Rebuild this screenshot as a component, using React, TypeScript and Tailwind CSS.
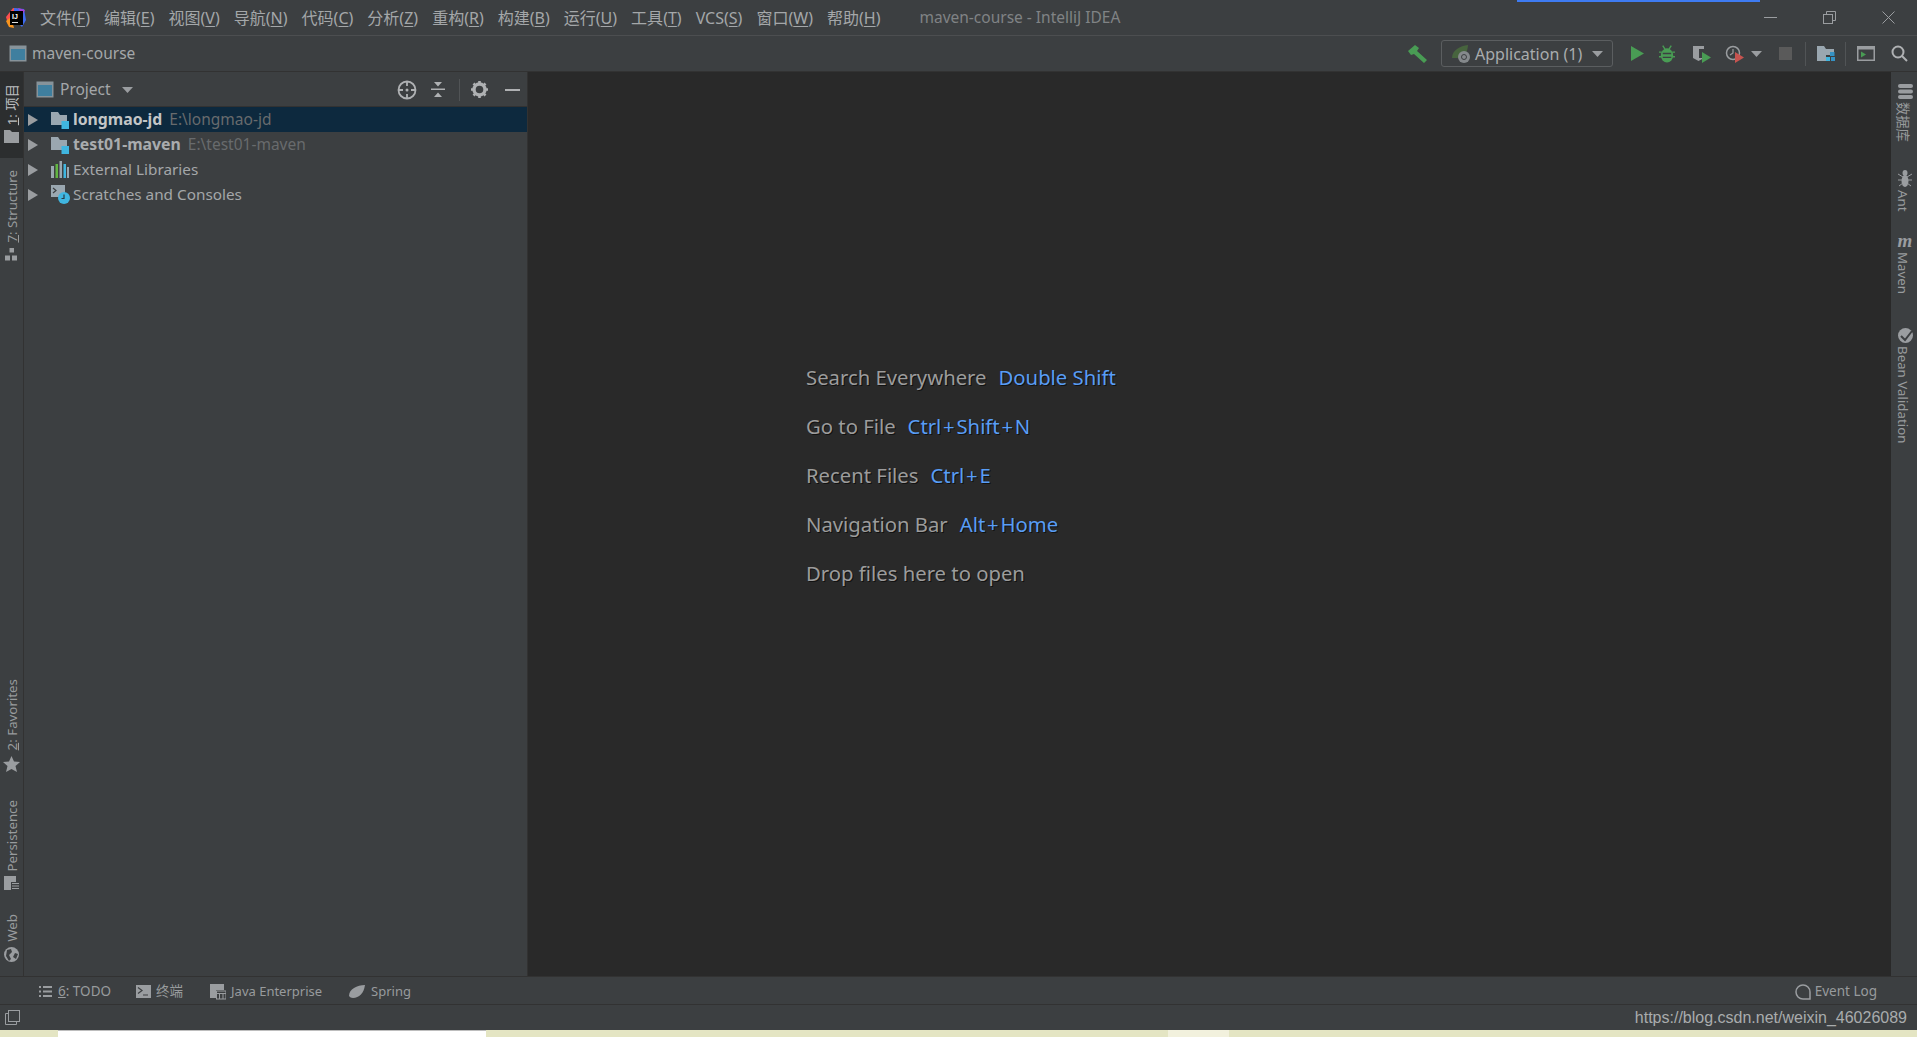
const UI = "font-['Noto_Sans','Noto_Sans_CJK_SC',sans-serif]";

const MENU = [
  ["文件", "F"],
  ["编辑", "E"],
  ["视图", "V"],
  ["导航", "N"],
  ["代码", "C"],
  ["分析", "Z"],
  ["重构", "R"],
  ["构建", "B"],
  ["运行", "U"],
  ["工具", "T"],
  ["VCS", "S"],
  ["窗口", "W"],
  ["帮助", "H"],
];

const HINTS = [
  ["Search Everywhere", "Double Shift"],
  ["Go to File", "Ctrl+Shift+N"],
  ["Recent Files", "Ctrl+E"],
  ["Navigation Bar", "Alt+Home"],
  ["Drop files here to open", ""],
];

function Logo() {
  return (
    <svg width="22" height="22" viewBox="0 0 22 22">
      <path d="M1 10 L8 1 L15 2 L10 12 L3 17 Z" fill="#fc4f4f" />
      <path d="M9 1 L19 2 L21 13 L17 20 L9 12 Z" fill="#3d6bf0" />
      <path d="M1 14 L6 10 L9 21 L4 20 Z" fill="#f7941d" />
      <path d="M13 1 L20 3 L17 9 Z" fill="#a83fd8" />
      <rect x="5" y="4" width="13" height="14" fill="#000" />
      <rect x="7" y="15" width="6" height="1" fill="#ddd" />
      <text x="7" y="12" fontSize="7" fontWeight="700" fill="#fff" fontFamily="Liberation Sans">IJ</text>
    </svg>
  );
}

function ModuleIcon() {
  return (
    <svg width="18" height="17" viewBox="0 0 18 17">
      <rect x="0.5" y="0.5" width="17" height="16" fill="#87939a" />
      <rect x="2" y="4" width="14" height="11" fill="#3f7f9f" />
    </svg>
  );
}

function FolderModule() {
  return (
    <svg width="19" height="18" viewBox="0 0 19 18">
      <path d="M0 1 H7 L9 4 H16 V14 H0 Z" fill="#9aa7b0" />
      <rect x="10.5" y="10" width="7.5" height="8" fill="#40b6e0" />
    </svg>
  );
}

function LibIcon() {
  return (
    <svg width="18" height="17" viewBox="0 0 18 17">
      <rect x="0" y="5" width="3" height="12" fill="#9aa7b0" />
      <rect x="4.5" y="3" width="2.5" height="14" fill="#62b543" />
      <rect x="8.5" y="0" width="2.5" height="17" fill="#9aa7b0" />
      <rect x="12.5" y="3" width="2.5" height="14" fill="#40b6e0" />
      <rect x="16" y="6" width="2" height="11" fill="#9aa7b0" />
    </svg>
  );
}

function ScratchIcon() {
  return (
    <svg width="19" height="19" viewBox="0 0 19 19">
      <rect x="0" y="0" width="14" height="12" fill="#9aa7b0" />
      <path d="M2 3 L5 5.5 L2 8" fill="none" stroke="#3c3f41" strokeWidth="1.2" />
      <circle cx="13" cy="13" r="6" fill="#40b6e0" />
      <path d="M13 9.5 V13.5 H10.5" fill="none" stroke="#2b3a44" strokeWidth="1.2" />
    </svg>
  );
}

function Arrow({ className = "" }: { className?: string }) {
  return (
    <svg width="10" height="12" viewBox="0 0 10 12" className={className}>
      <path d="M0 0 L10 6 L0 12 Z" fill="#9a9da0" />
    </svg>
  );
}

function Caret() {
  return (
    <svg width="11" height="6" viewBox="0 0 11 6">
      <path d="M0 0 H11 L5.5 6 Z" fill="#9a9da0" />
    </svg>
  );
}

function TreeRow({ icon, name, path, bold, selected }: { icon: React.ReactNode; name: string; path?: string; bold?: boolean; selected?: boolean }) {
  return (
    <div className={`flex h-[25px] items-center pl-[4px] ${selected ? "bg-[#0d293e]" : ""}`}>
      <Arrow className="shrink-0" />
      <span className="ml-[13px] flex w-[22px] shrink-0 justify-start">{icon}</span>
      <span className={bold ? `text-[15.8px] font-bold ${selected ? "text-[#c4c6c7]" : "text-[#a9acae]"}` : "text-[15.3px] text-[#a4a7a9]"}>{name}</span>
      {path && <span className="ml-[7px] text-[15.5px] text-[#686b6d]">{path}</span>}
    </div>
  );
}

function StripeLeft({ label, icon, active, className = "" }: { label: React.ReactNode; icon: React.ReactNode; active?: boolean; className?: string }) {
  return (
    <div className={`flex w-[23px] flex-col items-center ${active ? "bg-[#2c2e2f] text-[#bcbfc0]" : "text-[#989b9d]"} ${className}`}>
      <span className="ml-[2px] rotate-180 whitespace-nowrap text-[13.3px] leading-[23px] [text-orientation:sideways] [writing-mode:vertical-rl]">{label}</span>
      <span className="mt-[5px]">{icon}</span>
    </div>
  );
}

function StripeRight({ label, icon, className = "" }: { label: string; icon: React.ReactNode; className?: string }) {
  return (
    <div className={`flex flex-col items-center text-[#989b9d] ${className}`}>
      <span className="ml-[2px] flex">{icon}</span>
      <span className="mr-[2px] mt-[3px] whitespace-nowrap text-[13.3px] leading-[22px] [text-orientation:sideways] [writing-mode:vertical-rl]">{label}</span>
    </div>
  );
}

function KeyText({ keys }: { keys: string }) {
  const parts = keys.split("+");
  return (
    <span className="text-[#589df6]">
      {parts.map((part, i) => (
        <span key={part}>
          {i > 0 && <span className="px-[1.75px]">+</span>}
          {part}
        </span>
      ))}
    </span>
  );
}

const G = "#9a9da0";

function ToolIcon({ w, children }: { w: number; children?: React.ReactNode }) {
  return (
    <span className="flex shrink-0 items-center justify-center" style={{ width: w }}>
      {children}
    </span>
  );
}

export default function App() {
  return (
    <div className={`flex h-[1037px] w-[1917px] flex-col overflow-hidden bg-[#3c3f41] ${UI}`}>
      {/* title bar */}
      <div className="relative flex h-[36px] shrink-0 items-center border-b border-[#4c4e50] pl-[5px]">
        <Logo />
        <div className="ml-[13px] flex gap-[14px] text-[16px] text-[#a4a7a9]">
          {MENU.map(([name, key]) => (
            <span key={key} className="whitespace-nowrap">
              {name}(<span className="underline underline-offset-2">{key}</span>)
            </span>
          ))}
        </div>
        <span className="ml-[39px] text-[15.5px] text-[#808385]">maven-course - IntelliJ IDEA</span>
        <div className="absolute left-[1517px] top-0 h-[2px] w-[243px] bg-[#3e7bf2]" />
        <div className="ml-auto flex items-center gap-[46px] pr-[22px]">
          <svg width="13" height="2" viewBox="0 0 13 2"><rect width="13" height="1" fill={G} /></svg>
          <svg width="13" height="13" viewBox="0 0 13 13" fill="none" stroke={G}>
            <rect x="0.5" y="3.5" width="9" height="9" />
            <path d="M3.5 3 V0.5 H12.5 V9.5 H10" />
          </svg>
          <svg width="13" height="13" viewBox="0 0 13 13" stroke={G}><path d="M0.5 0.5 L12.5 12.5 M12.5 0.5 L0.5 12.5" /></svg>
        </div>
      </div>

      {/* navigation bar */}
      <div className="flex h-[36px] shrink-0 items-center border-b border-[#323232] pl-[9px] pr-[9px]">
        <ModuleIcon />
        <span className="ml-[5px] text-[15.5px] text-[#a4a7a9]">maven-course</span>
        <div className="ml-auto flex items-center">
          <ToolIcon w={20}>
            <svg width="19" height="18" viewBox="0 0 19 18" fill="#499c54">
              <path d="M0 6 L7 0 L11 3 L9 6 L19 15 L16 18 L6 9 L3 10 Z" />
            </svg>
          </ToolIcon>
          <div className="ml-[14px] flex h-[27px] w-[172px] items-center rounded-[3px] border border-[#5b5e60] pl-[9px] pr-[9px]">
            <svg width="22" height="20" viewBox="0 0 22 20">
              <path d="M1 14 C1 6 9 2 17 1 C17 8 12 14 6 14 Z" fill="#47643e" />
              <circle cx="13" cy="13" r="6" fill="#85898c" />
              <circle cx="13" cy="13" r="2.5" fill="none" stroke="#3c3f41" />
            </svg>
            <span className="ml-[2px] text-[16px] text-[#a9acae]">Application (1)</span>
            <span className="ml-auto flex"><Caret /></span>
          </div>
          <ToolIcon w={18} />
          <ToolIcon w={13}>
            <svg width="13" height="15" viewBox="0 0 13 15"><path d="M0 0 L13 7.5 L0 15 Z" fill="#499c54" /></svg>
          </ToolIcon>
          <ToolIcon w={15} />
          <ToolIcon w={16}>
            <svg width="17" height="18" viewBox="0 0 17 18" fill="#499c54">
              <ellipse cx="8.5" cy="10.5" rx="6.5" ry="7.5" />
              <path d="M4 0 L6.5 4 M13 0 L10.5 4 M0 7 H3 M17 7 H14 M0 12 H3 M17 12 H14" stroke="#499c54" strokeWidth="1.5" />
              <path d="M4 8.5 H13 M4 12.5 H13" stroke="#3c3f41" strokeWidth="1.4" />
            </svg>
          </ToolIcon>
          <ToolIcon w={17} />
          <ToolIcon w={20}>
            <svg width="20" height="18" viewBox="0 0 20 18">
              <path d="M1 1 H12 V13 L6.5 16 L1 13 Z" fill="#9a9da0" />
              <path d="M7 4 H12 V13 H7 Z" fill="#3c3f41" />
              <path d="M10 7 L19 12.5 L10 18 Z" fill="#499c54" />
            </svg>
          </ToolIcon>
          <ToolIcon w={13} />
          <ToolIcon w={20}>
            <svg width="20" height="18" viewBox="0 0 20 18">
              <circle cx="8" cy="8" r="6.5" fill="none" stroke="#9a9da0" strokeWidth="1.5" />
              <path d="M8 4 V8 L5 10" fill="none" stroke="#9a9da0" strokeWidth="1.2" />
              <path d="M10 7 L19 12.5 L10 18 Z" fill="#c75450" />
            </svg>
          </ToolIcon>
          <ToolIcon w={6} />
          <Caret />
          <ToolIcon w={17} />
          <svg width="13" height="13" viewBox="0 0 13 13"><rect width="13" height="13" fill="#5a5a5a" /></svg>
          <span className="ml-[13px] h-[24px] w-px bg-[#515456]" />
          <ToolIcon w={11} />
          <svg width="18" height="16" viewBox="0 0 18 16">
            <path d="M0 0 H7 L9 3 H17 V9 H9 V15 H0 Z" fill="#9aa7b0" />
            <rect x="13" y="6" width="4.5" height="4" fill="#3592c4" />
            <rect x="9" y="11" width="4" height="4" fill="#40b6e0" />
            <rect x="14" y="11" width="4" height="4" fill="#3592c4" />
          </svg>
          <span className="ml-[10px] h-[24px] w-px bg-[#515456]" />
          <ToolIcon w={11} />
          <svg width="18" height="15" viewBox="0 0 18 15">
            <rect x="0.75" y="0.75" width="16.5" height="13.5" fill="none" stroke="#9a9da0" strokeWidth="1.5" />
            <rect x="1" y="1" width="16" height="2.5" fill="#9a9da0" />
            <path d="M4 5.5 L9 8.5 L4 11.5 Z" fill="#499c54" />
          </svg>
          <ToolIcon w={16} />
          <svg width="17" height="17" viewBox="0 0 17 17" fill="none" stroke="#afb1b3" strokeWidth="2">
            <circle cx="7" cy="7" r="5.5" />
            <path d="M11 11 L16 16" />
          </svg>
        </div>
      </div>

      {/* main area */}
      <div className="flex min-h-0 flex-1">
        <div className="flex w-[24px] shrink-0 flex-col border-r border-[#323232]">
          <StripeLeft
            active
            className="h-[86px] pt-[12px]"
            label={<><span className="underline">1</span>: 项目</>}
            icon={
              <svg width="15" height="13" viewBox="0 0 15 13"><path d="M0 0 H6 L8 2 H15 V13 H0 Z" fill="#9a9da0" /></svg>
            }
          />
          <StripeLeft
            className="pt-[12px]"
            label={<><span className="underline">7</span>: Structure</>}
            icon={
              <svg width="13" height="13" viewBox="0 0 13 13" fill="#9a9da0">
                <rect x="4.5" y="0" width="4.5" height="4.5" />
                <rect x="0" y="7.5" width="5" height="5" />
                <rect x="7" y="7.5" width="5" height="5" />
              </svg>
            }
          />
          <StripeLeft
            className="mt-auto"
            label={<><span className="underline">2</span>: Favorites</>}
            icon={
              <svg width="17" height="16" viewBox="0 0 17 16"><path d="M8.5 0 L11 5.5 L17 6 L12.5 10 L14 16 L8.5 13 L3 16 L4.5 10 L0 6 L6 5.5 Z" fill="#9a9da0" /></svg>
            }
          />
          <StripeLeft
            className="mt-[28px]"
            label="Persistence"
            icon={
              <svg width="15" height="15" viewBox="0 0 15 15">
                <path d="M0 0 H12 V6 H7 V14 H0 Z" fill="#9a9da0" />
                <path d="M8 7.5 H15 M8 10 H15 M8 12.5 H15" stroke="#9a9da0" />
              </svg>
            }
          />
          <StripeLeft
            className="mb-[14px] mt-[23px]"
            label="Web"
            icon={
              <svg width="15" height="15" viewBox="0 0 15 15">
                <circle cx="7.5" cy="7.5" r="7.5" fill="#9a9da0" />
                <path d="M3 3 L7 2 L8 5 L5 8 L7 12 L5 14 L2 9 Z M11 6 L14 7 L12 12 L9 10 Z" fill="#3c3f41" />
              </svg>
            }
          />
        </div>

        {/* project panel */}
        <div className="flex w-[504px] shrink-0 flex-col border-r border-[#323232]">
          <div className="flex h-[35px] shrink-0 items-center border-b border-[#323232] pl-[12px] pr-[7px] pt-[1px]">
            <ModuleIcon />
            <span className="ml-[6px] text-[15.5px] text-[#a4a7a9]">Project</span>
            <span className="ml-[11px] flex"><Caret /></span>
            <div className="ml-auto flex items-center">
              <svg width="20" height="20" viewBox="0 0 20 20" fill="none" stroke="#afb1b3" strokeWidth="1.8">
                <circle cx="10" cy="10" r="8.5" />
                <path d="M10 1 V6 M10 14 V19 M1 10 H6 M14 10 H19" />
                <circle cx="10" cy="10" r="1.5" fill="#afb1b3" stroke="none" />
              </svg>
              <svg width="14" height="15" viewBox="0 0 14 15" className="ml-[14px]" fill="#afb1b3">
                <rect x="0" y="6.5" width="14" height="1.5" />
                <path d="M3 0 H11 L7 4.5 Z M3 15 H11 L7 10.5 Z" />
              </svg>
              <span className="ml-[14px] h-[22px] w-px bg-[#515456]" />
              <svg width="17" height="17" viewBox="0 0 17 17" className="ml-[11px]">
                <circle cx="8.5" cy="8.5" r="5.5" fill="none" stroke="#afb1b3" strokeWidth="3.4" />
                <path d="M8.5 0 V3 M8.5 14 V17 M0 8.5 H3 M14 8.5 H17 M2.5 2.5 L4.6 4.6 M12.4 12.4 L14.5 14.5 M2.5 14.5 L4.6 12.4 M12.4 4.6 L14.5 2.5" stroke="#afb1b3" strokeWidth="2.6" />
              </svg>
              <svg width="15" height="2" viewBox="0 0 15 2" className="ml-[17px]"><rect width="15" height="2" fill="#afb1b3" /></svg>
            </div>
          </div>
          <TreeRow selected bold icon={<FolderModule />} name="longmao-jd" path="E:\longmao-jd" />
          <TreeRow bold icon={<FolderModule />} name="test01-maven" path="E:\test01-maven" />
          <TreeRow icon={<LibIcon />} name="External Libraries" />
          <TreeRow icon={<ScratchIcon />} name="Scratches and Consoles" />
        </div>

        {/* editor placeholder */}
        <div className="min-w-0 flex-1 bg-[#292929] pl-[278px] pt-[291px] [text-shadow:1px_1px_0_#111]">
          {HINTS.map(([label, keys]) => (
            <div key={label} className="flex h-[49px] items-start gap-[12px] text-[20.3px] leading-[28px] text-[#9c9c9c]">
              <span>{label}</span>
              {keys && <KeyText keys={keys} />}
            </div>
          ))}
        </div>

        <div className="flex w-[26px] shrink-0 flex-col pt-[12px]">
          <StripeRight
            label="数据库"
            icon={
              <svg width="15" height="15" viewBox="0 0 15 15" fill="#9a9da0">
                <rect y="0" width="15" height="4" rx="2" />
                <rect y="5.5" width="15" height="4" rx="2" />
                <rect y="11" width="15" height="4" rx="2" />
              </svg>
            }
          />
          <StripeRight
            className="mt-[28px]"
            label="Ant"
            icon={
              <svg width="14" height="17" viewBox="0 0 14 17" fill="#9a9da0">
                <ellipse cx="7" cy="3" rx="2.5" ry="3" />
                <ellipse cx="7" cy="11" rx="3.5" ry="6" />
                <path d="M0 4 L5 7 M14 4 L9 7 M0 10 H5 M14 10 H9 M1 16 L5 13 M13 16 L9 13" stroke="#9a9da0" />
              </svg>
            }
          />
          <StripeRight
            className="mt-[22px]"
            label="Maven"
            icon={
              <span className="font-['Liberation_Serif',serif] text-[19px] font-bold italic leading-[16px] text-[#9a9da0]">m</span>
            }
          />
          <StripeRight
            className="mt-[34px]"
            label="Bean Validation"
            icon={
              <svg width="15" height="15" viewBox="0 0 15 15">
                <circle cx="7.5" cy="7.5" r="7.5" fill="#9a9da0" />
                <path d="M3 8 L7 12 L14 3" fill="none" stroke="#3c3f41" strokeWidth="2" />
              </svg>
            }
          />
        </div>
      </div>

      {/* tool window bar */}
      <div className="flex h-[29px] shrink-0 items-center border-y border-[#323232] pl-[39px] pr-[40px] pt-[2px] text-[13.5px] text-[#989b9d]">
        <svg width="13" height="11" viewBox="0 0 13 11" fill="#9a9da0">
          <path d="M0 0 H2 V2 H0 Z M4 0 H13 V2 H4 Z M0 4.5 H2 V6.5 H0 Z M4 4.5 H13 V6.5 H4 Z M0 9 H2 V11 H0 Z M4 9 H13 V11 H4 Z" />
        </svg>
        <span className="ml-[6px]"><span className="underline">6</span>: TODO</span>
        <svg width="15" height="13" viewBox="0 0 15 13" className="ml-[25px]">
          <rect width="15" height="13" fill="#9a9da0" />
          <path d="M2 2.5 L6 5.5 L2 8.5 M7 10 H12" fill="none" stroke="#3c3f41" strokeWidth="1.2" />
        </svg>
        <span className="ml-[5px]">终端</span>
        <svg width="16" height="16" viewBox="0 0 16 16" className="ml-[27px]">
          <path d="M0 0 H14 V6 H6 V14 H0 Z" fill="#9a9da0" />
          <rect x="6.5" y="7" width="9.5" height="8" fill="none" stroke="#9a9da0" />
          <path d="M6.5 9.5 H16 M9.5 9.5 V15 M13 9.5 V15" stroke="#9a9da0" />
        </svg>
        <span className="ml-[5px] text-[13px]">Java Enterprise</span>
        <svg width="16" height="13" viewBox="0 0 16 13" className="ml-[27px]">
          <path d="M0 11 C0 4 8 0 16 0 C15 8 10 13 4 13 C2 13 1 12 0 11 Z" fill="#9a9da0" />
        </svg>
        <span className="ml-[6px] text-[13px]">Spring</span>
        <svg width="16" height="16" viewBox="0 0 16 16" className="ml-auto" fill="none" stroke="#9a9da0" strokeWidth="1.5">
          <path d="M15 15 H8 A7 7 0 1 1 15 8 Z" />
        </svg>
        <span className="ml-[4px]">Event Log</span>
      </div>

      {/* status bar */}
      <div className="flex h-[25px] shrink-0 items-center pl-[5px] pr-[10px]">
        <svg width="15" height="15" viewBox="0 0 15 15" fill="none" stroke="#9a9da0">
          <rect x="3.5" y="0.5" width="11" height="11" />
          <path d="M3 3.5 H0.5 V14.5 H11.5 V12" />
        </svg>
        <span className="ml-auto font-['Liberation_Sans',sans-serif] text-[16px] text-[#a9acad]">https://blog.csdn.net/weixin_46026089</span>
      </div>

      {/* desktop behind the window */}
      <div className="flex h-[7px] shrink-0 bg-[#e4e5c3]">
        <div className="ml-[58px] w-[428px] border-t border-[#bdbdbd] bg-white" />
        <div className="ml-[682px] w-[61px] bg-[#f2f1dd]" />
      </div>
    </div>
  );
}
